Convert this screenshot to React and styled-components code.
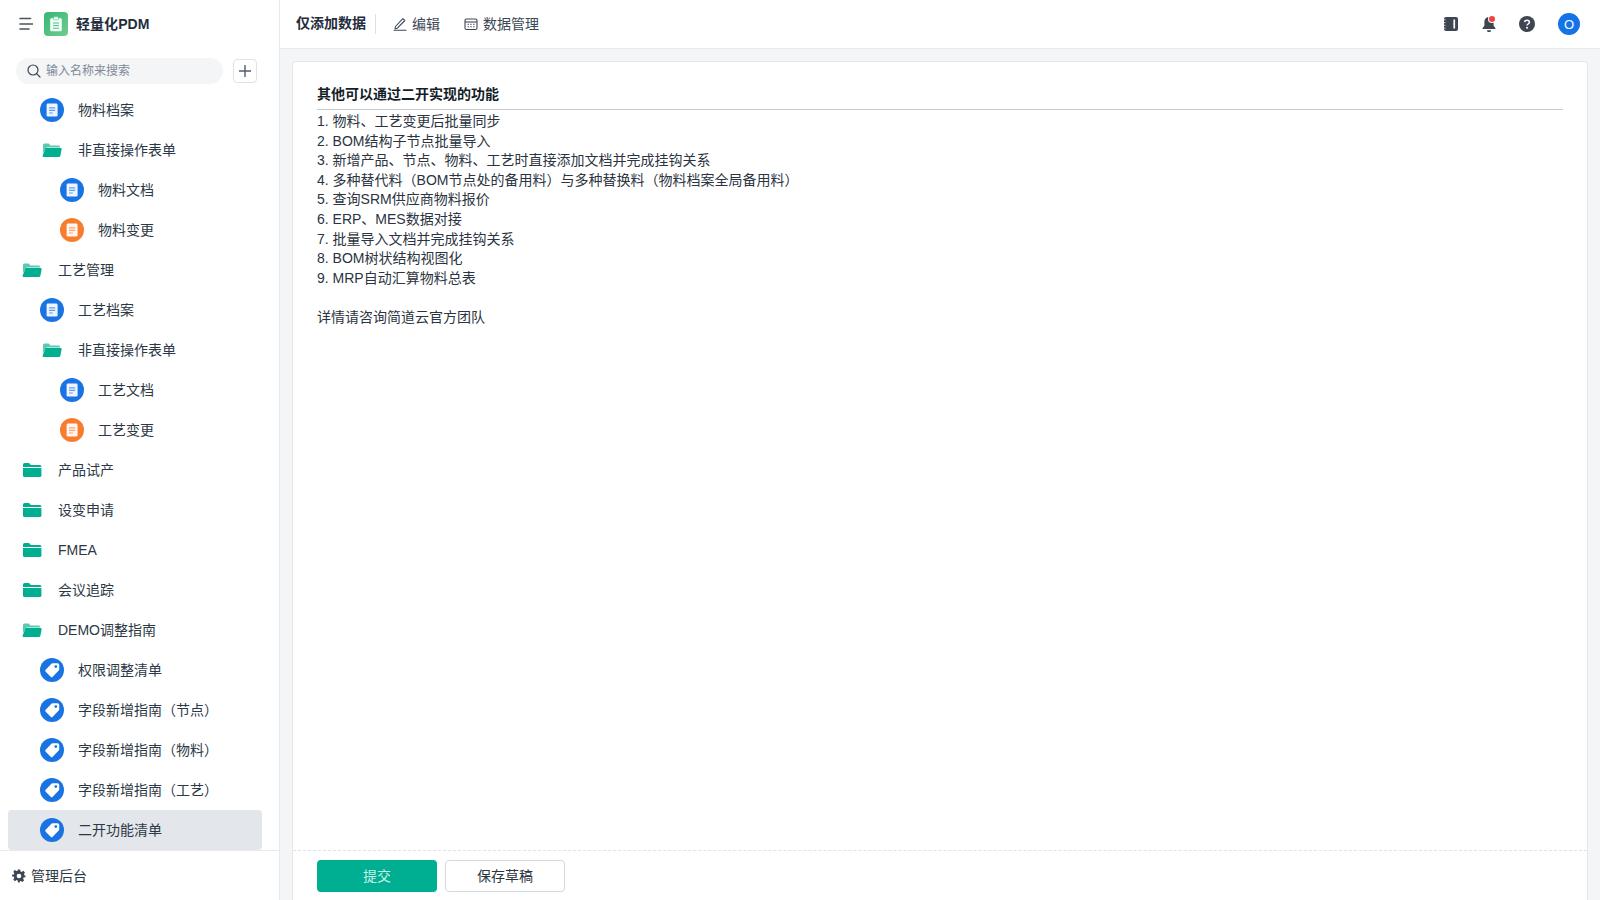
import React from "react";
import styled, { createGlobalStyle } from "styled-components";

const Global = createGlobalStyle`
  html, body { margin: 0; padding: 0; height: 100%; overflow: hidden; }
  body { font-family: "Liberation Sans", "Noto Sans CJK SC", sans-serif; font-size: 14px; color: #1f2d3d; background: #f3f5f6; }
  * { box-sizing: border-box; }
`;

const Label = styled.span`display: block; line-height: 20px;`;
const Shell = styled.div`display: flex; width: 1600px; height: 900px;`;
const Sidebar = styled.aside`width: 280px; height: 900px; flex: none; background: #fff; border-right: 1px solid #e6e9ed; display: flex; flex-direction: column;`;
const Brand = styled.div`height: 48px; display: flex; align-items: center; padding-left: 19px;`;
const BrandName = styled.div`margin-left: 8px; padding-bottom: 2px; font-size: 14px; font-weight: 700; letter-spacing: .06px; color: #1f2d3d;`;
const LogoBox = styled.div`width: 24px; height: 24px; margin-left: 11px; border-radius: 4px; background: linear-gradient(135deg, #35b676, #72cb90); display: flex; align-items: center; justify-content: center;`;
const SearchRow = styled.div`height: 42px; display: flex; align-items: flex-start; padding: 10px 0 0 16px;`;
const SearchBox = styled.div`width: 207px; height: 26px; border-radius: 13px; background: #f3f5f6; display: flex; align-items: center; padding-left: 11px; gap: 5px; font-size: 12px; color: #7f8a96;`;
const AddButton = styled.div`width: 24px; height: 24px; margin: 1px 0 0 10px; border: 1px solid #dfe2e6; border-radius: 4px; display: flex; align-items: center; justify-content: center; color: #525e6c;`;
const List = styled.div`flex: 1; overflow: hidden; padding: 0 17px 0 8px;`;
const Row = styled.div`height: 40px; display: flex; align-items: center; border-radius: 4px; padding-left: ${p => p.$level * 20 + 12}px; background: ${p => (p.$active ? "#e3e6ea" : "transparent")}; color: #2c3845;`;
const IconSlot = styled.div`width: 24px; height: 24px; flex: none; margin-right: 14px; display: flex; align-items: center; justify-content: center;`;
const FolderSlot = styled(IconSlot)`margin-left: 2px; margin-right: 12px; justify-content: flex-start;`;
const Footer = styled.div`height: 50px; flex: none; border-top: 1px solid #e6e9ed; display: flex; align-items: center; padding-left: 12px; gap: 5px; color: #2c3845; font-size: 14px;`;

const Main = styled.main`flex: 1; min-width: 0; display: flex; flex-direction: column; height: 900px;`;
const Header = styled.header`height: 49px; flex: none; background: #fff; border-bottom: 1px solid #e6e9ed; display: flex; align-items: center; padding: 0 20px 0 16px;`;
const PageTitle = styled.div`font-weight: 700; font-size: 14px; color: #1f2d3d; padding-right: 9px; height: 20px; line-height: 18px; border-right: 1px solid #dcdfe3;`;
const Tool = styled.div`display: flex; align-items: center; gap: 5px; margin-left: ${p => p.$gap}px; color: #3c4754;`;
const HeaderRight = styled.div`margin-left: auto; display: flex; align-items: center; gap: 22px;`;
const Avatar = styled.div`width: 22px; height: 22px; border-radius: 50%; background: #1473e6; color: #fff; font-size: 13px; display: flex; align-items: center; justify-content: center; margin-left: 1px;`;
const HeaderIcon = styled.div`width: 16px; height: 24px; display: flex; align-items: center; justify-content: center; position: relative;`;
const Dot = styled.span`position: absolute; top: 4px; right: 2px; width: 6px; height: 6px; border-radius: 50%; background: #ef4444; box-shadow: 0 0 0 1px #fff;`;

const Stage = styled.div`flex: 1; min-height: 0; padding: 12px 12px 0 12px;`;
const Card = styled.section`height: 100%; background: #fff; border: 1px solid #e4e7eb; border-bottom: none; border-radius: 4px 4px 0 0; display: flex; flex-direction: column;`;
const Content = styled.div`flex: 1; padding: 22px 24px 0 24px;`;
const Heading = styled.div`font-weight: 700; font-size: 14px; line-height: 20px; color: #141e28; padding-bottom: 5px; border-bottom: 1px solid #c9ccd0; margin-bottom: 2px;`;
const Line = styled.div`font-size: 14px; line-height: 19.6px; min-height: 19.6px; color: #2b3440;`;
const Actions = styled.div`height: 50px; flex: none; border-top: 1px dashed #dfe2e6; display: flex; align-items: flex-start; padding: 9px 0 0 24px; gap: 8px;`;
const Submit = styled.div`width: 120px; height: 32px; border-radius: 4px; background: #00af92; color: #c9f1e8; display: flex; align-items: center; justify-content: center;`;
const Draft = styled.div`width: 120px; height: 32px; border-radius: 4px; border: 1px solid #d5d8dc; background: #fff; color: #2b3440; display: flex; align-items: center; justify-content: center;`;

const colors = { blue: "#1a73e3", orange: "#f67c2e" };

const DocIcon = ({ color }) => (
  <svg width="24" height="24" viewBox="0 0 24 24">
    <circle cx="12" cy="12" r="12" fill={color} />
    <rect x="6.6" y="5.6" width="11" height="13" rx="1.4" fill="#fff" fillOpacity=".92" />
    <path d="M9 9.8h6.2M9 12.4h6.2M9 15h3.8" stroke={color} strokeOpacity=".65" strokeWidth="1.2" fill="none" />
  </svg>
);
const TagIcon = () => (
  <svg width="24" height="24" viewBox="0 0 24 24">
    <circle cx="12" cy="12" r="12" fill={colors.blue} />
    <path d="M12.8 5.2h4.8a1.6 1.6 0 0 1 1.6 1.6v4.6c0 .4-.2.8-.5 1.1l-6 6.3a1.4 1.4 0 0 1-2 0l-5-5a1.4 1.4 0 0 1 0-2l5.7-6.1c.3-.3.8-.5 1.4-.5z" fill="#fff" />
    <circle cx="15.8" cy="8.6" r="1.4" fill={colors.blue} />
  </svg>
);
const FolderIcon = ({ open }) =>
  open ? (
    <svg width="20" height="16" viewBox="0 0 20 16">
      <path d="M1 3a1.5 1.5 0 0 1 1.5-1.5h4.2L8.5 3.6h8A1.5 1.5 0 0 1 18 5v.6H4.6L1 11z" fill="#5cc9b4" />
      <path d="M3.6 6h15a1 1 0 0 1 1 1.2l-1.2 6.6a1.5 1.5 0 0 1-1.5 1.2H1.6a1 1 0 0 1-1-1.2z" fill="#00ae90" />
    </svg>
  ) : (
    <svg width="20" height="16" viewBox="0 0 20 16">
      <path d="M1 2.5A1.5 1.5 0 0 1 2.5 1h4.6l1.8 2.1h9a1.5 1.5 0 0 1 1.5 1.5v.5H1z" fill="#00ae90" />
      <path d="M1 6h18.4v7.5a1.5 1.5 0 0 1-1.5 1.5H2.5A1.5 1.5 0 0 1 1 13.5z" fill="#00ae90" />
    </svg>
  );

const rows = [
  { l: 1, t: "doc", c: "blue", text: "物料档案" },
  { l: 1, t: "open", text: "非直接操作表单" },
  { l: 2, t: "doc", c: "blue", text: "物料文档" },
  { l: 2, t: "doc", c: "orange", text: "物料变更" },
  { l: 0, t: "open", text: "工艺管理" },
  { l: 1, t: "doc", c: "blue", text: "工艺档案" },
  { l: 1, t: "open", text: "非直接操作表单" },
  { l: 2, t: "doc", c: "blue", text: "工艺文档" },
  { l: 2, t: "doc", c: "orange", text: "工艺变更" },
  { l: 0, t: "closed", text: "产品试产" },
  { l: 0, t: "closed", text: "设变申请" },
  { l: 0, t: "closed", text: "FMEA" },
  { l: 0, t: "closed", text: "会议追踪" },
  { l: 0, t: "open", text: "DEMO调整指南" },
  { l: 1, t: "tag", text: "权限调整清单" },
  { l: 1, t: "tag", text: "字段新增指南（节点）" },
  { l: 1, t: "tag", text: "字段新增指南（物料）" },
  { l: 1, t: "tag", text: "字段新增指南（工艺）" },
  { l: 1, t: "tag", text: "二开功能清单", active: true },
];

const lines = [
  "1. 物料、工艺变更后批量同步",
  "2. BOM结构子节点批量导入",
  "3. 新增产品、节点、物料、工艺时直接添加文档并完成挂钩关系",
  "4. 多种替代料（BOM节点处的备用料）与多种替换料（物料档案全局备用料）",
  "5. 查询SRM供应商物料报价",
  "6. ERP、MES数据对接",
  "7. 批量导入文档并完成挂钩关系",
  "8. BOM树状结构视图化",
  "9. MRP自动汇算物料总表",
  "",
  "详情请咨询简道云官方团队",
];

export default function App() {
  return (
    <Shell>
      <Global />
      <Sidebar>
        <Brand>
          <svg width="14" height="14" viewBox="0 0 14 14" fill="none" stroke="#4a5560" strokeWidth="1.6" strokeLinecap="round">
            <path d="M1 1.5h10.5M1 7h13M1 12h9" />
          </svg>
          <LogoBox>
            <svg width="14" height="16" viewBox="0 0 14 16">
              <path d="M2.2 2.2h9.6a1 1 0 0 1 1 1v11a1 1 0 0 1-1 1H2.2a1 1 0 0 1-1-1v-11a1 1 0 0 1 1-1z" fill="#f0fff6" />
              <rect x="4.5" y="0.8" width="5" height="3" rx=".8" fill="#f0fff6" stroke="#4cbf83" strokeWidth=".6" />
              <path d="M4 7h6M4 9.6h6M4 12.2h6" stroke="#4cbf83" strokeWidth="1" />
            </svg>
          </LogoBox>
          <BrandName>轻量化PDM</BrandName>
        </Brand>
        <SearchRow>
          <SearchBox>
            <svg width="14" height="14" viewBox="0 0 14 14" fill="none" stroke="#3c4754" strokeWidth="1.2" strokeLinecap="round">
              <circle cx="6" cy="6" r="5" />
              <path d="M9.8 9.8L13 13" />
            </svg>
            <Label>输入名称来搜索</Label>
          </SearchBox>
          <AddButton>
            <svg width="12" height="12" viewBox="0 0 12 12" stroke="currentColor" strokeWidth="1.4">
              <path d="M6 0v12M0 6h12" />
            </svg>
          </AddButton>
        </SearchRow>
        <List>
          {rows.map((r, i) => (
            <Row key={i} $level={r.l} $active={r.active}>
              {r.t === "open" || r.t === "closed" ? (
                <FolderSlot><FolderIcon open={r.t === "open"} /></FolderSlot>
              ) : (
                <IconSlot>{r.t === "doc" ? <DocIcon color={colors[r.c]} /> : <TagIcon />}</IconSlot>
              )}
              <Label>{r.text}</Label>
            </Row>
          ))}
        </List>
        <Footer>
          <svg width="14" height="14" viewBox="0 0 24 24" fill="#3c4754">
            <path fillRule="evenodd" d="M10 1h4l.7 3.2 1.9.8 2.8-1.8 2.8 2.8-1.8 2.8.8 1.9L23 11v3l-3.2.7-.8 1.9 1.8 2.8-2.8 2.8-2.8-1.8-1.9.8L13.6 23h-3.2l-.7-3.2-1.9-.8L5 20.8 2.2 18 4 15.2l-.8-1.9L0 12.6V10l3.2-.7.8-1.9L2.2 4.6 5 1.8 7.8 3.6l1.9-.8zM12 8a4 4 0 1 0 0 8 4 4 0 0 0 0-8z" />
          </svg>
          <Label>管理后台</Label>
        </Footer>
      </Sidebar>
      <Main>
        <Header>
          <PageTitle>仅添加数据</PageTitle>
          <Tool $gap={17}>
            <svg width="14" height="14" viewBox="0 0 14 14" fill="none" stroke="#3c4754" strokeWidth="1.1" strokeLinejoin="round" strokeLinecap="round">
              <path d="M2.5 9.5L9.8 1.6l2 1.9-7.4 7.7-2.4.5zM1 13.2h12" />
            </svg>
            <Label>编辑</Label>
          </Tool>
          <Tool $gap={24}>
            <svg width="14" height="14" viewBox="0 0 14 14" fill="none" stroke="#3c4754" strokeWidth="1.1">
              <rect x="1" y="2" width="12" height="10.5" rx="1.5" />
              <path d="M1 5h12" />
              <path d="M3.5 7.3h1.4M6.3 7.3h1.4M9.1 7.3h1.4M3.5 9.8h1.4M6.3 9.8h1.4M9.1 9.8h1.4" strokeWidth="1" />
            </svg>
            <Label>数据管理</Label>
          </Tool>
          <HeaderRight>
            <HeaderIcon>
              <svg width="16" height="16" viewBox="0 0 16 16">
                <rect x="1" y="1" width="14" height="14" rx="2" fill="#3f4651" />
                <path d="M0 3.8h2.6M0 6.6h2.6M0 9.4h2.6M0 12.2h2.6" stroke="#fff" strokeWidth=".7" />
                <rect x="10.4" y="3.5" width="1.7" height="9" fill="#fff" />
              </svg>
            </HeaderIcon>
            <HeaderIcon>
              <svg width="14" height="16" viewBox="0 0 14 16">
                <path d="M7 1a4.6 4.6 0 0 1 4.6 4.6v4.2l1.8 2.3v.9H.6v-.9l1.8-2.3V5.6A4.6 4.6 0 0 1 7 1z" fill="#3f4651" />
                <path d="M5 14.2h4a2 2 0 0 1-4 0z" fill="#3f4651" />
              </svg>
              <Dot />
            </HeaderIcon>
            <HeaderIcon>
              <svg width="16" height="16" viewBox="0 0 16 16">
                <circle cx="8" cy="8" r="8" fill="#3f4651" />
                <path d="M5.6 6.2A2.4 2.4 0 0 1 8 4.2c1.4 0 2.4.9 2.4 2 0 1.8-2.4 1.8-2.4 3.4" fill="none" stroke="#fff" strokeWidth="1.5" />
                <circle cx="8" cy="11.8" r="1" fill="#fff" />
              </svg>
            </HeaderIcon>
            <Avatar>O</Avatar>
          </HeaderRight>
        </Header>
        <Stage>
          <Card>
            <Content>
              <Heading>其他可以通过二开实现的功能</Heading>
              {lines.map((l, i) => <Line key={i}>{l}</Line>)}
            </Content>
            <Actions>
              <Submit><Label>提交</Label></Submit>
              <Draft><Label>保存草稿</Label></Draft>
            </Actions>
          </Card>
        </Stage>
      </Main>
    </Shell>
  );
}
